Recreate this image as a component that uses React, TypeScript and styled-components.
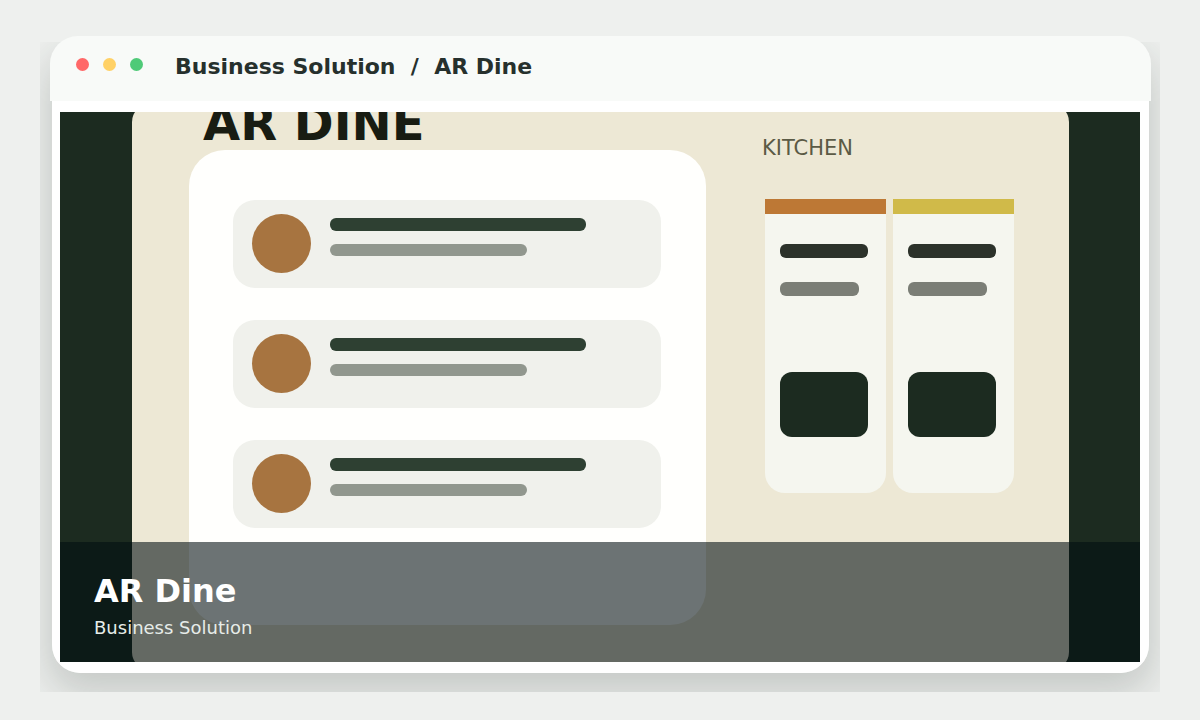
import React from "react";
import styled, { createGlobalStyle } from "styled-components";

const GlobalStyle = createGlobalStyle`
  *, *::before, *::after { box-sizing: border-box; }
  body {
    margin: 0;
    background: #eef0ee;
    font-family: "DejaVu Sans", Verdana, sans-serif;
  }
  h1, h2, h3, p, ul { margin: 0; padding: 0; }
  ul { list-style: none; }
`;

const Page = styled.main`
  padding: 36px 40px 28px;
`;

const Stage = styled.div`
  position: relative;
  padding: 0 9px 19px 10px;
`;

const ShadowLayer = styled.div`
  position: absolute;
  inset: 6px 0 0;
  overflow: hidden;
  padding: 0 11px 19px 12px;
`;

const ShadowShape = styled.div`
  height: 100%;
  border-radius: 28px;
  box-shadow: 0 16px 40px 6px rgba(24, 36, 30, 0.19);
`;

const Window = styled.article`
  position: relative;
`;

const TitleBar = styled.header`
  display: flex;
  align-items: flex-start;
  gap: 32px;
  height: 65px;
  padding: 17px 26px 0;
  border-radius: 28px 28px 0 0;
  background: #f8faf8;
`;

const Dots = styled.div`
  display: flex;
  gap: 14px;
  margin-top: 5px;
`;

const Dot = styled.span<{ $color: string }>`
  width: 13px;
  height: 13px;
  border-radius: 50%;
  background: ${(p) => p.$color};
`;

const WindowTitle = styled.h1`
  font-size: 22px;
  line-height: 28px;
  font-weight: 700;
  color: #26302d;
  white-space: pre;
`;

const WindowBody = styled.div`
  margin: 0 2px;
  padding: 11px 9px 11px 8px;
  border-radius: 0 0 28px 28px;
  background: #ffffff;
`;

const Hero = styled.section`
  position: relative;
  overflow: hidden;
  padding: 0 71px 0 72px;
  background: #1c2b20;
`;

const Board = styled.div`
  display: grid;
  grid-template-columns: minmax(0, 517fr) minmax(0, 252fr);
  gap: 56px;
  margin: -8px 0;
  padding: 0 55px 45px 57px;
  border-radius: 18px;
  background: #ede8d5;
`;

const BoardTitle = styled.h2`
  margin: 0 0 8px 14px;
  font-size: 48px;
  line-height: 38px;
  font-weight: 700;
  color: #181c12;
  white-space: nowrap;
`;

const MenuCard = styled.ul`
  display: flex;
  flex-direction: column;
  gap: 32px;
  min-height: 475px;
  padding: 50px 45px 50px 44px;
  border-radius: 36px;
  background: #fffffd;
`;

const MenuItem = styled.li`
  display: flex;
  gap: 19px;
  height: 88px;
  padding: 14px 19px;
  border-radius: 22px;
  background: #f0f1ec;
`;

const Dish = styled.span`
  flex: none;
  width: 59px;
  height: 59px;
  border-radius: 50%;
  background: #a77440;
`;

const DishLines = styled.div`
  flex: 1;
  display: flex;
  flex-direction: column;
  gap: 13px;
  padding-top: 4px;
`;

const Line = styled.span<{ $width: string; $height: number; $color: string }>`
  width: ${(p) => p.$width};
  height: ${(p) => p.$height}px;
  border-radius: 6px;
  background: ${(p) => p.$color};
`;

const Kitchen = styled.div`
  padding-top: 32px;
`;

const KitchenLabel = styled.h3`
  margin-bottom: 39px;
  font-size: 21px;
  line-height: 24px;
  font-weight: 400;
  color: #5b5a45;
`;

const Lanes = styled.div`
  display: grid;
  grid-template-columns: 1fr 1fr;
  gap: 7px;
  padding-left: 3px;
`;

const Lane = styled.div<{ $accent: string }>`
  display: flex;
  flex-direction: column;
  gap: 24px;
  height: 294px;
  padding: 30px 18px 0 15px;
  border-top: 15px solid ${(p) => p.$accent};
  border-radius: 0 0 20px 20px;
  background: #f5f6ef;
`;

const Ticket = styled.span`
  height: 65px;
  margin-top: 52px;
  border-radius: 12px;
  background: #1c2b20;
`;

const Caption = styled.div`
  position: absolute;
  inset: auto 0 0;
  height: 120px;
  padding: 29px 34px 0;
  background: rgba(2, 14, 17, 0.58);
`;

const CaptionTitle = styled.h2`
  margin-bottom: 5px;
  font-size: 32px;
  line-height: 40px;
  font-weight: 700;
  color: #ffffff;
`;

const CaptionText = styled.p`
  font-size: 18px;
  line-height: 24px;
  color: #e6ece8;
`;

const dishes = ["first", "second", "third"];
const lanes = ["#bd7835", "#d0ba49"];

export default function App() {
  return (
    <>
      <GlobalStyle />
      <Page>
        <Stage>
          <ShadowLayer>
            <ShadowShape />
          </ShadowLayer>
          <Window>
            <TitleBar>
              <Dots>
                <Dot $color="#ff6868" />
                <Dot $color="#ffd166" />
                <Dot $color="#4fca78" />
              </Dots>
              <WindowTitle>{"Business Solution  /  AR Dine"}</WindowTitle>
            </TitleBar>
            <WindowBody>
              <Hero>
                <Board>
                  <div>
                    <BoardTitle>AR DINE</BoardTitle>
                    <MenuCard>
                      {dishes.map((dish) => (
                        <MenuItem key={dish}>
                          <Dish />
                          <DishLines>
                            <Line $width="82%" $height={13} $color="#2e4032" />
                            <Line $width="63%" $height={12} $color="#91978e" />
                          </DishLines>
                        </MenuItem>
                      ))}
                    </MenuCard>
                  </div>
                  <Kitchen>
                    <KitchenLabel>KITCHEN</KitchenLabel>
                    <Lanes>
                      {lanes.map((accent) => (
                        <Lane key={accent} $accent={accent}>
                          <Line $width="100%" $height={14} $color="#2c322a" />
                          <Line $width="90%" $height={14} $color="#7b7e76" />
                          <Ticket />
                        </Lane>
                      ))}
                    </Lanes>
                  </Kitchen>
                </Board>
                <Caption>
                  <CaptionTitle>AR Dine</CaptionTitle>
                  <CaptionText>Business Solution</CaptionText>
                </Caption>
              </Hero>
            </WindowBody>
          </Window>
        </Stage>
      </Page>
    </>
  );
}
